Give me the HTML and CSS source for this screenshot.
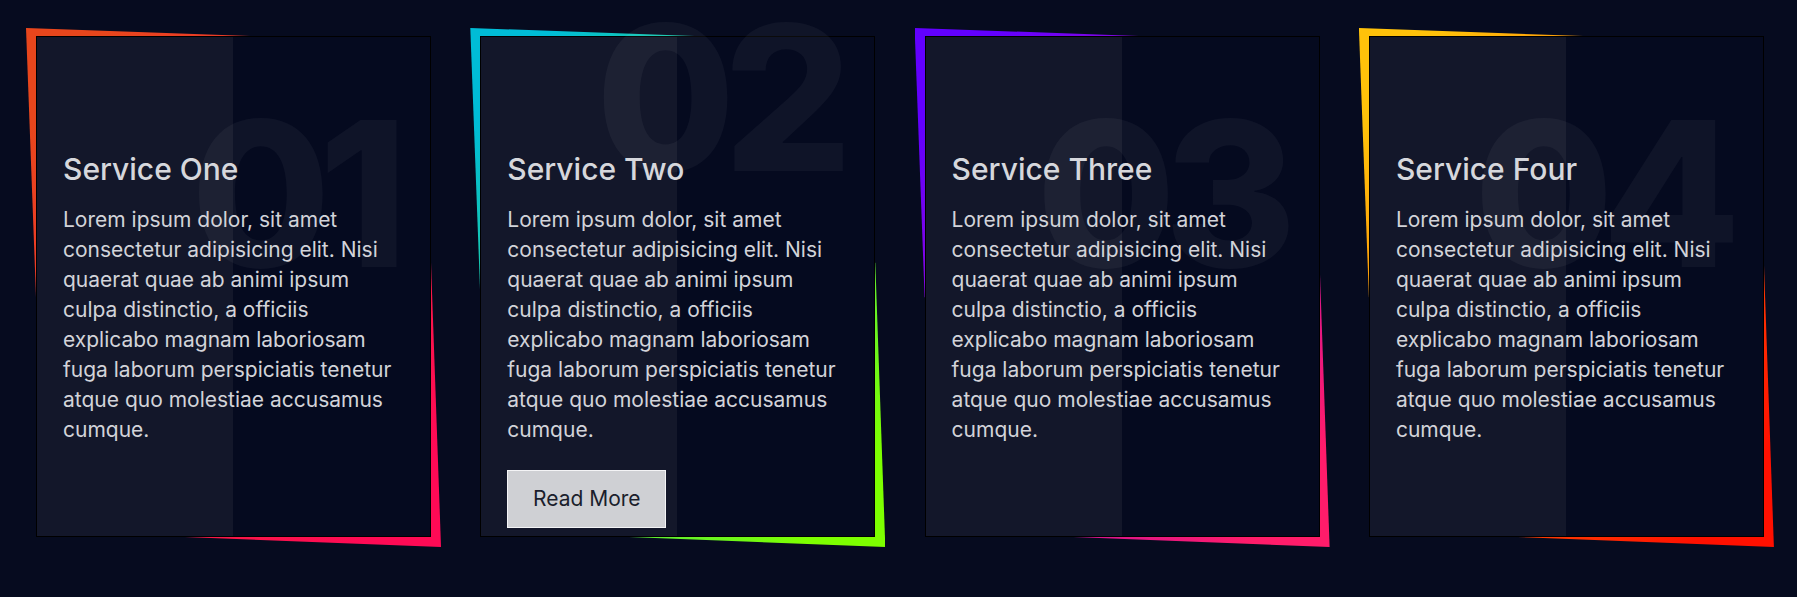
FILE: index.html
```html
<!DOCTYPE html>
<html lang="en">
<head>
<meta charset="utf-8">
<title>Services</title>
<link rel="stylesheet" href="styles.css">
</head>
<body>
<section class="services">
  <div class="card c1">
    <span class="num">01</span>
    <div class="content">
      <h2 class="title">Service One</h2>
      <p class="text">Lorem ipsum dolor, sit amet consectetur adipisicing elit. Nisi quaerat quae ab animi ipsum culpa distinctio, a officiis explicabo magnam laboriosam fuga laborum perspiciatis tenetur atque quo molestiae accusamus cumque.</p>
    </div>
  </div>
  <div class="card c2 active">
    <span class="num">02</span>
    <div class="content">
      <h2 class="title">Service Two</h2>
      <p class="text">Lorem ipsum dolor, sit amet consectetur adipisicing elit. Nisi quaerat quae ab animi ipsum culpa distinctio, a officiis explicabo magnam laboriosam fuga laborum perspiciatis tenetur atque quo molestiae accusamus cumque.</p>
      <a class="btn" href="#">Read More</a>
    </div>
  </div>
  <div class="card c3">
    <span class="num">03</span>
    <div class="content">
      <h2 class="title">Service Three</h2>
      <p class="text">Lorem ipsum dolor, sit amet consectetur adipisicing elit. Nisi quaerat quae ab animi ipsum culpa distinctio, a officiis explicabo magnam laboriosam fuga laborum perspiciatis tenetur atque quo molestiae accusamus cumque.</p>
    </div>
  </div>
  <div class="card c4">
    <span class="num">04</span>
    <div class="content">
      <h2 class="title">Service Four</h2>
      <p class="text">Lorem ipsum dolor, sit amet consectetur adipisicing elit. Nisi quaerat quae ab animi ipsum culpa distinctio, a officiis explicabo magnam laboriosam fuga laborum perspiciatis tenetur atque quo molestiae accusamus cumque.</p>
    </div>
  </div>
</section>
</body>
</html>
```
FILE: styles.css
```css
* { box-sizing: border-box; }

html {
  background: #060b1f;
}

body {
  margin: 0;
  padding: 0;
  font-family: Inter, "Noto Sans", sans-serif;
  color: #d2d3d9;
  width: 1797px;
  height: 597px;
  overflow: hidden;
}

.services {
  display: grid;
  grid-template-columns: repeat(4, 395px);
  column-gap: 49.3px;
  padding: 36px 0 0 36px;
}

.card {
  position: relative;
  height: 501px;
  border: 1px solid #000;
  background: linear-gradient(90deg, #13172a 0, #13172a 50%, #050a1f 50%, #050a1f 100%);
  padding: 112px 26px 0 26px;
}

.card::before {
  content: "";
  position: absolute;
  left: -11px;
  top: -9px;
  right: -11px;
  bottom: -11px;
  z-index: -1;
  background: linear-gradient(to bottom right, var(--c1) 10%, var(--c2) 90%);
  clip-path: polygon(0 0, 224px 8px, 405px 235px, 100% 100%, 159px 509px, 10px 269px);
}

.c1 { --c1: #e8461c; --c2: #ff0a55; }
.c2 { --c1: #00bcd6; --c2: #7dff00; }
.c3 { --c1: #6200ff; --c2: #ff1c6a; }
.c4 { --c1: #ffc20a; --c2: #ff1000; }

.num {
  position: absolute;
  top: 56px;
  right: 34px;
  font-family: Inter, sans-serif;
  font-weight: 800;
  font-size: 202px;
  line-height: 1;
  letter-spacing: -12px;
  color: rgba(255, 255, 255, 0.045);
  pointer-events: none;
}

.active .num {
  top: -40px;
}

.content {
  position: relative;
}

.title {
  margin: 0 0 16px;
  font-size: 30px;
  line-height: 40px;
  font-weight: 500;
  color: #d6d7dc;
}

.text {
  margin: 0;
  font-size: 21px;
  line-height: 30px;
  font-weight: 400;
}

.btn {
  display: inline-block;
  margin-top: 25px;
  width: 159px;
  height: 58px;
  line-height: 56px;
  text-align: center;
  background: #cfd0d4;
  border: 1px solid #f4f4f6;
  color: #1b1e2c;
  font-size: 21px;
  text-decoration: none;
}
```
